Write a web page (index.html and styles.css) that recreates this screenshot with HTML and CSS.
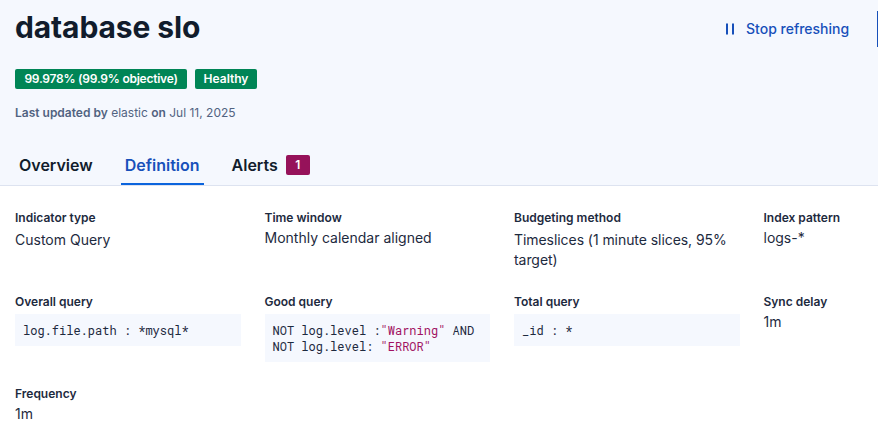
FILE: index.html
```html
<!DOCTYPE html>
<html lang="en">
<head>
<meta charset="utf-8">
<title>database slo</title>
<link rel="stylesheet" href="styles.css">
</head>
<body>
<header class="header">
  <div class="title-row">
    <h1 class="title">database slo</h1>
    <div class="actions">
      <button class="refresh" type="button">
        <svg class="pause" width="10" height="12" viewBox="0 0 10 12"><path d="M1 0.5h2v11H1zM7 0.5h2v11H7z" fill="currentColor"/></svg>
        <span class="refresh-label">Stop refreshing</span>
      </button>
      <span class="action-edge"></span>
    </div>
  </div>
  <div class="badges">
    <span class="badge badge-objective">99.978% (99.9% objective)</span>
    <span class="badge badge-health">Healthy</span>
  </div>
  <p class="updated"><b>Last updated by</b> elastic <b>on</b> Jul 11, 2025</p>
  <nav class="tabs">
    <a class="tab">Overview</a>
    <a class="tab selected">Definition</a>
    <a class="tab">Alerts <span class="count">1</span></a>
  </nav>
</header>
<main class="grid">
  <section class="item spaced"><h2>Indicator type</h2><p>Custom Query</p></section>
  <section class="item"><h2>Time window</h2><p>Monthly calendar aligned</p></section>
  <section class="item spaced"><h2>Budgeting method</h2><p class="budgeting">Timeslices (1 minute slices, 95% target)</p></section>
  <section class="item"><h2>Index pattern</h2><p>logs-*</p></section>
  <section class="item"><h2>Overall query</h2><pre><code>log.file.path : *mysql*</code></pre></section>
  <section class="item"><h2>Good query</h2><pre><code><span class="line">NOT log.level :<span class="string">"Warning"</span> AND</span><span class="line">NOT log.level: <span class="string">"ERROR"</span></span></code></pre></section>
  <section class="item"><h2>Total query</h2><pre><code>_id : *</code></pre></section>
  <section class="item"><h2>Sync delay</h2><p>1m</p></section>
  <section class="item"><h2>Frequency</h2><p>1m</p></section>
</main>
</body>
</html>
```
FILE: styles.css
```css
* { box-sizing: border-box; }
body {
  margin: 0;
  height: 433px;
  overflow: hidden;
  background: #fff;
  color: #1d2a3e;
  font: 14px/20px Inter, sans-serif;
}
h1, h2, p, pre { margin: 0; }
.header {
  height: 186px;
  padding-left: 15px;
  background: #f5f8fe;
  border-bottom: 1px solid #dde3f0;
}
.title-row {
  display: flex;
  justify-content: space-between;
  height: 69px;
}
.title {
  padding-top: 7px;
  color: #111c2c;
  font-size: 30px;
  line-height: 40px;
  font-weight: 700;
  letter-spacing: -0.12px;
}
.actions { display: flex; padding-top: 11px; }
.refresh {
  display: flex;
  align-items: center;
  width: 124px;
  height: 36px;
  margin-right: 28px;
  padding: 0;
  border: 0;
  background: none;
  color: #1750ba;
  font: 500 14px/20px Inter, sans-serif;
  white-space: nowrap;
}
.refresh-label { margin-left: 11px; }
.pause { flex: none; }
.action-edge {
  width: 1px;
  height: 36px;
  background: #1750ba;
}
.badges { display: flex; gap: 8px; height: 20px; }
.badge {
  border-radius: 2px;
  background: #008556;
  color: #fff;
  font-size: 12px;
  line-height: 20px;
  font-weight: 600;
  text-align: center;
  white-space: nowrap;
}
.badge-objective { width: 172px; letter-spacing: -0.24px; }
.badge-health { width: 62px; }
.updated {
  margin-top: 14px;
  color: #516381;
  font-size: 12px;
}
.updated b { font-weight: 600; }
.tabs {
  display: flex;
  gap: 24px;
  height: 40px;
  margin-top: 22px;
}
.tab {
  display: flex;
  align-items: center;
  height: 40px;
  padding: 0 4px;
  color: #111c2c;
  font-size: 16px;
  line-height: 24px;
  font-weight: 600;
}
.selected {
  color: #1750ba;
  box-shadow: inset 0 -2px #0b64dd;
}
.count {
  width: 24px;
  height: 20px;
  margin-left: 8px;
  border-radius: 2px;
  background: #96125a;
  color: #fff;
  font-size: 12px;
  line-height: 20px;
  text-align: center;
}
.grid {
  display: grid;
  grid-template-columns: repeat(3, 225.5px) 1fr;
  column-gap: 24px;
  grid-template-rows: 60px 68px 40px;
  row-gap: 24px;
  padding: 24px 0 0 15px;
}
.item h2 {
  color: #1d2a3e;
  font-size: 12px;
  line-height: 16px;
  font-weight: 600;
}
.item p { margin-top: 2px; }
.item .budgeting { letter-spacing: -0.06px; }
.spaced p { margin-top: 4px; }
.item pre {
  margin-top: 4px;
  padding: 8px;
  background: #f5f8fe;
  font: 12px/16px "Roboto Mono", "DejaVu Sans Mono", monospace;
}
.item code { display: block; font: inherit; }
.line { display: block; }
.string { color: #a11262; }
.item .spaced, .spaced .budgeting { margin-top: 4px; }
```
